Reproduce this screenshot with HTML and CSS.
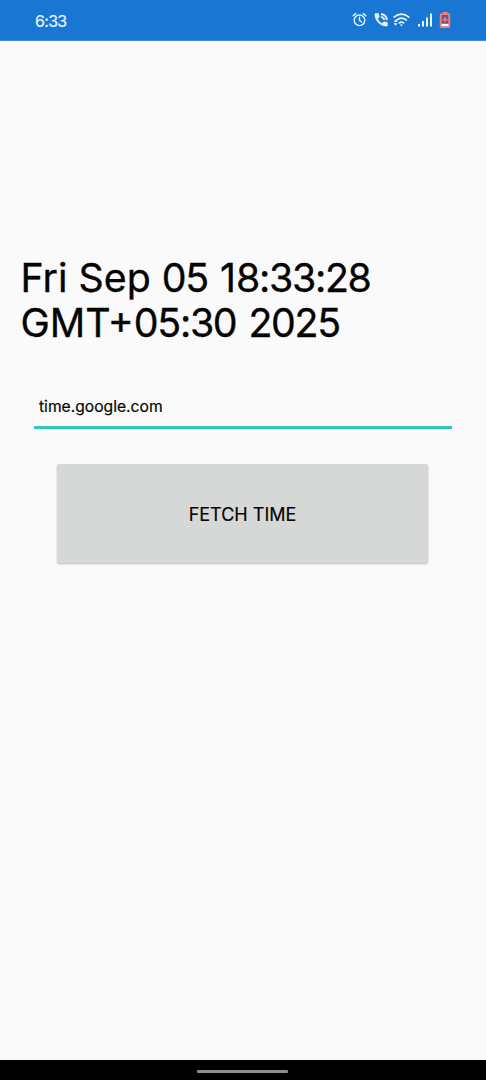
FILE: index.html
```html
<!DOCTYPE html>
<html lang="en">
<head>
<meta charset="utf-8">
<title>Fetch Time</title>
<link rel="stylesheet" href="styles.css">
</head>
<body>
<header class="status">
  <span class="clock">6:33</span>
  <svg class="status-icons" width="102" height="20" viewBox="0 0 102 20" fill="none">
    <g stroke="#e6f7ff" stroke-width="1.4" stroke-linecap="round">
      <circle cx="9.5" cy="10.3" r="5.3"/>
      <path d="M9.500 7.200v3.300l2.200 1.500M3.200 5.800l2.500-2.200M15.800 5.800l-2.500-2.200"/>
    </g>
    <g transform="translate(24.2 2.8) scale(.7)">
      <path fill="#e6f7ff" d="M20 15.500c-1.250 0-2.450-.2-3.570-.57a1.020 1.020 0 0 0-1.020.24l-2.200 2.200a15.050 15.050 0 0 1-6.590-6.590l2.200-2.210a.96.96 0 0 0 .25-1A11.400 11.400 0 0 1 8.500 4c0-.55-.45-1-1-1H4c-.55 0-1 .45-1 1 0 9.390 7.610 17 17 17 .55 0 1-.45 1-1v-3.500c0-.55-.45-1-1-1zM19 12h2a9 9 0 0 0-9-9v2c3.870 0 7 3.130 7 7zm-4 0h2c0-2.760-2.240-5-5-5v2c1.660 0 3 1.340 3 3z" stroke="#e6f7ff" stroke-width=".8" transform="translate(-2 -2)"/>
    </g>
    <g stroke="#e6f7ff" stroke-width="1.7" stroke-linecap="round">
      <path d="M44 7.100q7.400-5.800 14.800 0M46.600 10.100q4.900-3.800 9.800 0M49.200 12.900q2.200-1.600 4.400 0"/>
    </g>
    <path fill="#e6f7ff" d="M49.800 14.400h3.200l-1.600 2zM43.600 12l2-2.500 2 2.500zM43.600 13.200h4l-2 2.500z"/>
    <path fill="#e6f7ff" d="M68 14h2v2.500h-2zM72 11h2v5.500h-2zM76 7.500h2v9h-2zM80 3.500h2v13h-2z"/>
    <path fill="#ef8279" d="M92.300 2h5.400v1.500h1.500q1 0 1 1v12q0 1.500-1.500 1.500h-7.400q-1.500 0-1.500-1.500v-12q0-1 1-1h2.500z"/>
    <path fill="#70547f" d="M91.700 5h6.600v8.500h-6.600z"/>
    <path fill="#ff7565" d="M94.200 7h1.600v1.700h1.700v1.700h-1.700V12h-1.600v-1.600h-1.700V8.700h1.700z"/>
    <path fill="#fff" d="M91.700 14h6.600v2h-6.600z"/>
  </svg>
</header>
<main class="content">
  <h1 class="time"><span class="line">Fri Sep <span class="num">05</span> <span class="num stamp"><span class="one">1</span>8:33:28</span></span><span class="line">GMT+<span class="num">05:30</span> <span class="num stamp">2025</span></span></h1>
  <div class="server" role="textbox">time.google.com</div>
  <button class="fetch">FETCH TIME</button>
</main>
<footer class="navbar"><div class="handle"></div></footer>
</body>
</html>
```
FILE: styles.css
```css
* { box-sizing: border-box; }
body {
  margin: 0;
  height: 1080px;
  display: flex;
  flex-direction: column;
  background: #fafafa;
  color: #050505;
  font-family: Inter, Roboto, sans-serif;
  overflow: hidden;
}
.status {
  height: 41px;
  padding: 0 35px;
  display: flex;
  align-items: center;
  justify-content: space-between;
  background: #1976d2;
  border-bottom: 1px solid #3d8bd8;
}
.clock {
  color: #e6f7ff;
  font-size: 16px;
  letter-spacing: -.7px;
  padding-top: 2px;
  -webkit-text-stroke: .2px #e6f7ff;
}
.status-icons { display: block; margin-right: -1px; }
.content {
  flex: 1;
  display: flex;
  flex-direction: column;
  align-items: flex-start;
  padding: 214px 0 0 19px;
}
.time {
  margin: 0 0 0 1.500px;
  font-size: 39.300px;
  font-weight: 400;
  line-height: 45px;
  white-space: nowrap;
  -webkit-text-stroke: .35px #050505;
}
.line { display: block; }
.num { letter-spacing: -1.300px; }
.stamp { margin-left: 1px; }
.one { letter-spacing: 0; }
.server {
  width: 418px;
  height: 43px;
  margin: 41px 0 0 15px;
  padding: 1px 5px 0;
  border-bottom: 3px solid #2fc8bb;
  font-size: 15.650px;
  line-height: 40px;
  -webkit-text-stroke: .2px #050505;
}
.fetch {
  width: 371px;
  height: 99px;
  margin: 35px 0 0 38px;
  padding: 1px 0 0;
  border: 0;
  border-radius: 2px;
  background: #d6d8d7;
  box-shadow: 0 1px 2px rgba(0, 0, 0, .25);
  color: #050505;
  font: 400 18px Inter, Roboto, sans-serif;
  -webkit-text-stroke: .2px #050505;
}
.navbar {
  height: 20px;
  display: flex;
  justify-content: center;
  padding: 10px 1px 0 0;
  background: #000;
}
.handle {
  width: 91px;
  height: 3px;
  border-radius: 1px;
  background: #8e8c8e;
}
```
